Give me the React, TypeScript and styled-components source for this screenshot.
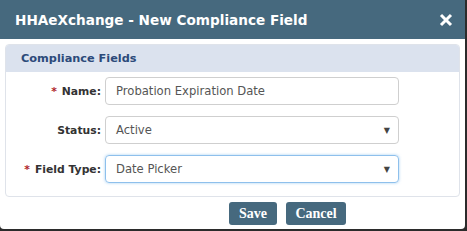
import React from "react";
import styled, { createGlobalStyle } from "styled-components";

const Global = createGlobalStyle`
  html, body {
    margin: 0;
    padding: 0;
    background: #2b2b2b;
  }
  body {
    font-family: "DejaVu Sans", Verdana, sans-serif;
  }
`;

const Dialog = styled.div`
  width: 465px;
  height: 229px;
  background: #fff;
  border-radius: 0 0 4px 4px;
  overflow: hidden;
  display: flex;
  flex-direction: column;
`;

const TitleBar = styled.div`
  height: 39px;
  background: #46697e;
  display: flex;
  align-items: center;
  justify-content: space-between;
  padding: 0 12px 0 15px;
  color: #fff;
`;

const Title = styled.div`
  font-size: 13.6px;
  font-weight: bold;
`;

const Close = styled.button`
  border: 0;
  background: none;
  padding: 0;
  width: 14px;
  height: 14px;
  display: flex;
`;

const Body = styled.div`
  padding: 5px 5px 0 5px;
`;

const Panel = styled.div`
  border: 1px solid #dfe3ea;
  border-radius: 4px;
  height: 153px;
  box-sizing: border-box;
`;

const PanelHeading = styled.div`
  background: #dbe2ee;
  height: 27px;
  display: flex;
  align-items: center;
  padding-left: 15px;
  font-size: 11.3px;
  font-weight: bold;
  color: #2c4a7a;
  border-radius: 3px 3px 0 0;
`;

const Form = styled.div`
  display: grid;
  grid-template-columns: 95px 294px;
  column-gap: 4px;
  row-gap: 11px;
  padding-top: 5px;
  align-items: center;
`;

const Label = styled.label`
  text-align: right;
  font-size: 10.8px;
  font-weight: bold;
  color: #333;
`;

const Star = styled.span`
  color: #b0262b;
  margin-right: 5px;
`;

const Field = styled.div<{ $focus?: boolean }>`
  height: 28px;
  box-sizing: border-box;
  border: 1px solid ${(p) => (p.$focus ? "#8ec0ec" : "#cfcfcf")};
  box-shadow: ${(p) => (p.$focus ? "0 0 3px rgba(102,175,233,0.6)" : "none")};
  border-radius: 4px;
  display: flex;
  align-items: center;
  justify-content: space-between;
  padding: 0 8px 0 10px;
  font-size: 11.6px;
  color: #555;
`;

const Arrow = styled.span`
  font-size: 8px;
  color: #444;
`;

const Footer = styled.div`
  display: flex;
  justify-content: center;
  gap: 9px;
  padding-top: 5px;
  padding-left: 110px;
`;

const Button = styled.button<{ $w: number }>`
  width: ${(p) => p.$w}px;
  height: 23px;
  border: 0;
  border-radius: 3px;
  background: #46697e;
  color: #fff;
  font-family: "Liberation Serif", "Times New Roman", serif;
  font-weight: bold;
  font-size: 14px;
  padding: 0;
`;

export default function App() {
  return (
    <>
      <Global />
      <Dialog>
        <TitleBar>
          <Title>HHAeXchange - New Compliance Field</Title>
          <Close aria-label="close">
            <svg width="14" height="14" viewBox="0 0 14 14">
              <path d="M2 2 L12 12 M12 2 L2 12" stroke="#fff" strokeWidth="3" />
            </svg>
          </Close>
        </TitleBar>
        <Body>
          <Panel>
            <PanelHeading>Compliance Fields</PanelHeading>
            <Form>
              <Label>
                <Star>*</Star>Name:
              </Label>
              <Field>Probation Expiration Date</Field>
              <Label>Status:</Label>
              <Field>
                Active<Arrow>▼</Arrow>
              </Field>
              <Label>
                <Star>*</Star>Field Type:
              </Label>
              <Field $focus>
                Date Picker<Arrow>▼</Arrow>
              </Field>
            </Form>
          </Panel>
          <Footer>
            <Button $w={48}>Save</Button>
            <Button $w={60}>Cancel</Button>
          </Footer>
        </Body>
      </Dialog>
    </>
  );
}
